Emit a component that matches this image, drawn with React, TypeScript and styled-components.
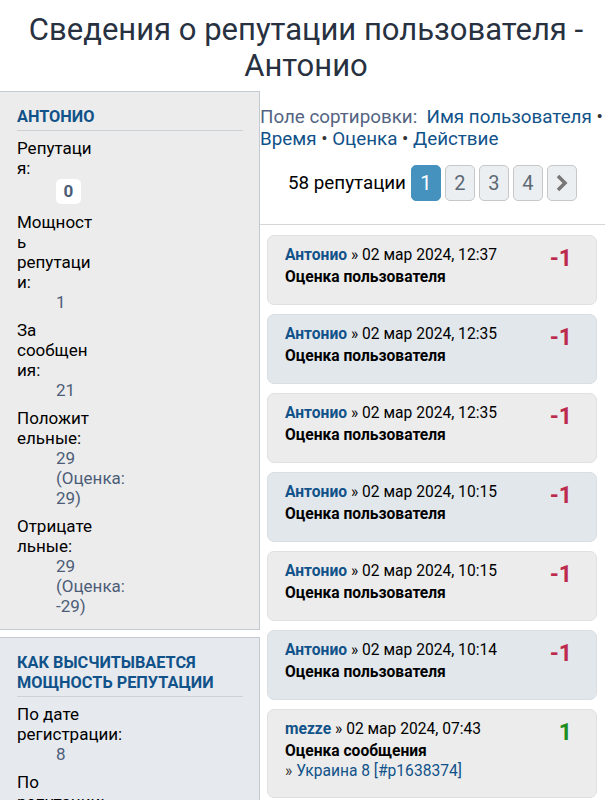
import { Fragment } from 'react';
import styled, { createGlobalStyle } from 'styled-components';

const GlobalStyle = createGlobalStyle`
  body {
    margin: 0;
    background: #fff;
    font-family: Roboto, 'Noto Sans', sans-serif;
    color: #000;
  }
`;

const Title = styled.h2`
  margin: 0;
  padding: 12px 10px 7px;
  font-size: 31px;
  line-height: 36px;
  font-weight: 400;
  text-align: center;
  color: #28313f;
`;

const Layout = styled.div`
  display: flex;
  align-items: flex-start;
`;

const Sidebar = styled.aside`
  width: 260px;
  flex: none;
  display: flex;
  flex-direction: column;
  gap: 7px;
`;

const Panel = styled.div<{ $blue?: boolean }>`
  background: ${p => (p.$blue ? '#e6eaef' : '#ececec')};
  border: 1px solid #c3cad1;
  border-left: none;
  padding: 15px 16px 5px 17px;
`;

const PanelTitle = styled.h3`
  margin: 0 0 7px;
  padding-bottom: 3px;
  border-bottom: 1px solid #cdd2d7;
  font-size: 16.3px;
  line-height: 20px;
  font-weight: 700;
  text-transform: uppercase;
  color: #105289;
`;

const Dl = styled.dl`
  margin: 0;
`;

const Dt = styled.dt<{ $w: number }>`
  width: ${p => p.$w}px;
  font-size: 17px;
  line-height: 20px;
  overflow-wrap: anywhere;
`;

const Dd = styled.dd`
  margin: 0 0 8px 39px;
  width: 80px;
  font-size: 17px;
  line-height: 20px;
  color: #4c5d77;
`;

const RepBox = styled.span`
  display: inline-block;
  margin: 1px 0 0;
  min-width: 25px;
  height: 25px;
  line-height: 25px;
  background: #fff;
  border-radius: 5px;
  text-align: center;
  font-weight: 700;
  color: #4c5d77;
`;

const Main = styled.main`
  flex: 1;
  padding-top: 15px;
`;

const SortLine = styled.div`
  font-size: 18.8px;
  line-height: 22px;
  color: #536482;
  padding-right: 4px;
`;

const SortLink = styled.a`
  color: #105289;
  text-decoration: none;
`;

const Dot = styled.span`
  color: #333;
`;

const Pager = styled.div`
  display: flex;
  justify-content: center;
  align-items: center;
  gap: 4px;
  margin: 15px 7px 0 0;
  padding-bottom: 23px;
  border-bottom: 1px solid #d6d6d6;
`;

const Count = styled.span`
  font-size: 18.8px;
  margin-right: 1px;
`;

const PageBtn = styled.span<{ $active?: boolean }>`
  width: 28px;
  height: 34px;
  display: flex;
  align-items: center;
  justify-content: center;
  font-size: 20px;
  border-radius: 5px;
  border: 1px solid ${p => (p.$active ? '#4692bf' : '#c7c7c7')};
  background: ${p => (p.$active ? '#4692bf' : '#eceff1')};
  color: ${p => (p.$active ? '#fff' : '#5e6a77')};
`;

const List = styled.div`
  display: flex;
  flex-direction: column;
  gap: 9px;
  padding: 10px 15px 0 7px;
`;

const Card = styled.div<{ $blue?: boolean }>`
  display: flex;
  background: ${p => (p.$blue ? '#e2e7ec' : '#ececec')};
  border: 1px solid ${p => (p.$blue ? '#d9dee3' : '#e0e0e0')};
  border-radius: 7px;
  padding: 8px 24px 16px 17px;
`;

const CardBody = styled.div`
  flex: 1;
  font-size: 15.6px;
  line-height: 22px;
`;

const Author = styled.a`
  color: #105289;
  font-weight: 700;
  text-decoration: none;
`;

const Action = styled.div`
  font-weight: 700;
`;

const PostLink = styled.div`
  line-height: 19px;
  color: #105289;
  & span { color: #333; }
`;

const Score = styled.div<{ $plus?: boolean }>`
  padding-top: 2px;
  font-size: 23px;
  line-height: 26px;
  font-weight: 700;
  color: ${p => (p.$plus ? '#1e8e1e' : '#bc2a4d')};
`;

const entries = [
  { who: 'Антонио', time: '02 мар 2024, 12:37', act: 'Оценка пользователя', score: -1 },
  { who: 'Антонио', time: '02 мар 2024, 12:35', act: 'Оценка пользователя', score: -1 },
  { who: 'Антонио', time: '02 мар 2024, 12:35', act: 'Оценка пользователя', score: -1 },
  { who: 'Антонио', time: '02 мар 2024, 10:15', act: 'Оценка пользователя', score: -1 },
  { who: 'Антонио', time: '02 мар 2024, 10:15', act: 'Оценка пользователя', score: -1 },
  { who: 'Антонио', time: '02 мар 2024, 10:14', act: 'Оценка пользователя', score: -1 },
  { who: 'mezze', time: '02 мар 2024, 07:43', act: 'Оценка сообщения', score: 1, post: 'Украина 8 [#p1638374]' },
];

export default function App() {
  return (
    <Fragment>
      <GlobalStyle />
      <Title>Сведения о репутации пользователя - Антонио</Title>
      <Layout>
        <Sidebar>
          <Panel>
            <PanelTitle>Антонио</PanelTitle>
            <Dl>
              <Dt $w={78}>Репутация:</Dt>
              <Dd><RepBox>0</RepBox></Dd>
              <Dt $w={78}>Мощность репутации:</Dt>
              <Dd>1</Dd>
              <Dt $w={78}>За сообщения:</Dt>
              <Dd>21</Dd>
              <Dt $w={78}>Положительные:</Dt>
              <Dd>29 (Оценка: 29)</Dd>
              <Dt $w={78}>Отрицательные:</Dt>
              <Dd>29 (Оценка: -29)</Dd>
            </Dl>
          </Panel>
          <Panel $blue>
            <PanelTitle>Как высчитывается мощность репутации</PanelTitle>
            <Dl>
              <Dt $w={106}>По дате регистрации:</Dt>
              <Dd>8</Dd>
              <Dt $w={106}>По репутации:</Dt>
              <Dd>0</Dd>
            </Dl>
          </Panel>
        </Sidebar>
        <Main>
          <SortLine>
            Поле сортировки:&nbsp; <SortLink href="#">Имя пользователя</SortLink> <Dot>•</Dot>{' '}
            <SortLink href="#">Время</SortLink> <Dot>•</Dot> <SortLink href="#">Оценка</SortLink> <Dot>•</Dot>{' '}
            <SortLink href="#">Действие</SortLink>
          </SortLine>
          <Pager>
            <Count>58 репутации</Count>
            <PageBtn $active>1</PageBtn>
            <PageBtn>2</PageBtn>
            <PageBtn>3</PageBtn>
            <PageBtn>4</PageBtn>
            <PageBtn>
              <svg width="14" height="18" viewBox="0 0 14 18">
                <path d="M3 2 L10 9 L3 16" fill="none" stroke="#777" strokeWidth="3.5" />
              </svg>
            </PageBtn>
          </Pager>
          <List>
            {entries.map((e, i) => (
              <Card key={i} $blue={i % 2 === 1}>
                <CardBody>
                  <div>
                    <Author href="#">{e.who}</Author> » {e.time}
                  </div>
                  <Action>{e.act}</Action>
                  {e.post && (
                    <PostLink>
                      <span>» </span>
                      {e.post}
                    </PostLink>
                  )}
                </CardBody>
                <Score $plus={e.score > 0}>{e.score}</Score>
              </Card>
            ))}
          </List>
        </Main>
      </Layout>
    </Fragment>
  );
}
